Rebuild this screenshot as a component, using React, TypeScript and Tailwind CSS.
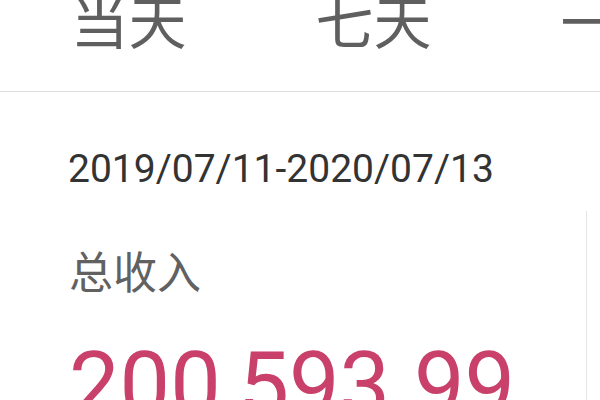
import React from "react";

export default function App() {
  const tabs = ["当天", "七天", "一月"];
  return (
    <div className="w-[600px] h-[400px] overflow-hidden bg-white relative">
      <div className="h-[92px] border-b border-[#dedede] flex pl-[6px] overflow-hidden">
        {tabs.map((t) => (
          <div
            key={t}
            className="w-[245px] shrink-0 text-center text-[58px] leading-none -mt-[10px] text-[#5f5f5f] whitespace-nowrap"
            style={{ fontFamily: '"Noto Sans CJK SC", sans-serif' }}
          >
            {t}
          </div>
        ))}
      </div>
      <div
        className="pl-[68px] pt-[58px] text-[39px] leading-none text-[#333333] whitespace-nowrap"
        style={{ fontFamily: 'Roboto, "Noto Sans CJK SC", sans-serif' }}
      >
        2019/07/11-2020/07/13
      </div>
      <div className="flex mt-[22px]">
        <div className="w-[587px] h-[200px] shrink-0 border-r border-[#e6e6e6] pl-[69px] pt-[37px]">
          <div
            className="text-[44px] leading-none text-[#616161]"
            style={{ fontFamily: '"Noto Sans CJK SC", sans-serif' }}
          >
            总收入
          </div>
          <div
            className="mt-[49px] text-[90px] leading-none text-[#c9406a] whitespace-nowrap"
            style={{ fontFamily: 'Roboto, sans-serif' }}
          >
            200,593.99
          </div>
        </div>
      </div>
    </div>
  );
}
